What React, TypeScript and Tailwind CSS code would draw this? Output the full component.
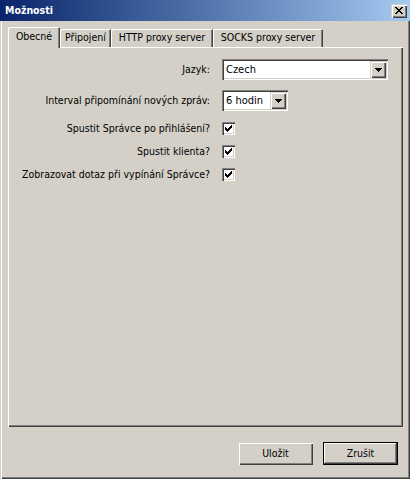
import { ReactNode } from 'react'

const raised = 'shadow-[inset_1px_1px_#d4d0c8,inset_2px_2px_#fff,inset_-1px_-1px_#404040,inset_-2px_-2px_#808080]'
const sunken = 'shadow-[inset_1px_1px_#808080,inset_2px_2px_#404040,inset_-1px_-1px_#fff,inset_-2px_-2px_#d4d0c8]'

function CloseGlyph() {
  return (
    <svg width="8" height="7" viewBox="0 0 8 7" shapeRendering="crispEdges">
      <path d="M0 0h2v1H0zM6 0h2v1H6zM1 1h2v1H1zM5 1h2v1H5zM2 2h4v1H2zM3 3h2v1H3zM2 4h4v1H2zM1 5h2v1H1zM5 5h2v1H5zM0 6h2v1H0zM6 6h2v1H6z" fill="#000" />
    </svg>
  )
}

function Arrow() {
  return (
    <svg width="7" height="4" viewBox="0 0 7 4" shapeRendering="crispEdges">
      <path d="M0 0h7v1H0zM1 1h5v1H1zM2 2h3v1H2zM3 3h1v1H3z" fill="#000" />
    </svg>
  )
}

function Check() {
  return (
    <svg width="7" height="7" viewBox="0 0 7 7" shapeRendering="crispEdges">
      <path d="M0 2h1v3H0zM1 3h1v3H1zM2 4h1v3H2zM3 3h1v3H3zM4 2h1v3H4zM5 1h1v3H5zM6 0h1v3H6z" fill="#000" />
    </svg>
  )
}

function Select({ value, width }: { value: string; width: string }) {
  return (
    <div className={`${width} h-[21px] bg-white flex items-stretch p-[2px] ${sunken}`}>
      <span className="flex-1 pl-[2px] flex items-center leading-none text-[11px]">{value}</span>
      <div className={`w-[16px] bg-[#d4d0c8] flex items-center justify-center ${raised}`}>
        <Arrow />
      </div>
    </div>
  )
}

function CheckBox() {
  return (
    <div className={`w-[13px] h-[13px] bg-white flex items-center justify-center ${sunken}`}>
      <Check />
    </div>
  )
}

function Row({ label, children, className = '' }: { label: string; children: ReactNode; className?: string }) {
  return (
    <div className={`flex items-center ${className}`}>
      <span className="w-[202px] text-right whitespace-nowrap">{label}</span>
      <div className="ml-[12px]">{children}</div>
    </div>
  )
}

const tabs = [
  { name: 'Obecné', w: 'w-[52px]' },
  { name: 'Připojení', w: 'w-[51px]' },
  { name: 'HTTP proxy server', w: 'w-[102px]' },
  { name: 'SOCKS proxy server', w: 'w-[110px]' },
]

export default function App() {
  return (
    <div className="w-[413px] h-[479px] bg-white flex font-['DejaVu_Sans_Condensed','Liberation_Sans',sans-serif] text-[10.5px] text-black">
      <div className="w-[410px] h-[479px] bg-[#d4d0c8] flex flex-col shadow-[inset_1px_0_#d4d0c8,inset_2px_0_#fff,inset_-1px_-1px_#404040,inset_-2px_-2px_#808080]">
        {/* Title bar */}
        <div className="h-[21px] bg-linear-to-r from-[#0a246a] to-[#a6caf0] flex items-center justify-between pl-[5px] pr-[3px]">
          <span className="text-white font-bold">Možnosti</span>
          <div className={`w-[16px] h-[14px] bg-[#d4d0c8] pl-[4px] pt-[3px] ${raised}`}>
            <CloseGlyph />
          </div>
        </div>

        <div className="flex flex-col pl-[8px] pr-[7px] pt-[6px]">
          {/* Tabs */}
          <div className="flex items-end h-[20px]">
            {tabs.map((t, i) =>
              i === 0 ? (
                <div
                  key={t.name}
                  className={`${t.w} h-[21px] -mb-[1px] relative z-10 bg-[#d4d0c8] flex items-center justify-center pb-[2px] rounded-t-[2px] shadow-[inset_1px_1px_#fff,inset_-1px_0_#404040,inset_-2px_0_#808080]`}
                >
                  {t.name}
                </div>
              ) : (
                <div
                  key={t.name}
                  className={`${t.w} h-[18px] bg-[#d4d0c8] flex items-center justify-center rounded-t-[2px] shadow-[inset_1px_1px_#fff,inset_-1px_0_#404040,inset_-2px_0_#808080]`}
                >
                  {t.name}
                </div>
              )
            )}
          </div>

          {/* Panel */}
          <div className="h-[380px] pt-[12px] shadow-[inset_1px_1px_#fff,inset_-1px_-1px_#404040,inset_-2px_-2px_#808080]">
            <Row label="Jazyk:" className="h-[21px]">
              <Select value="Czech" width="w-[166px]" />
            </Row>
            <Row label="Interval připomínání nových zpráv:" className="h-[21px] mt-[10px]">
              <Select value="6 hodin" width="w-[66px]" />
            </Row>
            <Row label="Spustit Správce po přihlášení?" className="h-[23px] mt-[6px]">
              <CheckBox />
            </Row>
            <Row label="Spustit klienta?" className="h-[23px]">
              <CheckBox />
            </Row>
            <Row label="Zobrazovat dotaz při vypínání Správce?" className="h-[23px]">
              <CheckBox />
            </Row>
          </div>

          {/* Buttons */}
          <div className="flex justify-end gap-[10px] pr-[5px] mt-[15px]">
            <button className={`w-[75px] h-[23px] bg-[#d4d0c8] ${raised}`}>Uložit</button>
            <button className="w-[75px] h-[23px] bg-[#d4d0c8] border border-black shadow-[inset_-1px_-1px_#404040,inset_1px_1px_#fff,inset_-2px_-2px_#808080]">
              Zrušit
            </button>
          </div>
        </div>
      </div>
    </div>
  )
}
